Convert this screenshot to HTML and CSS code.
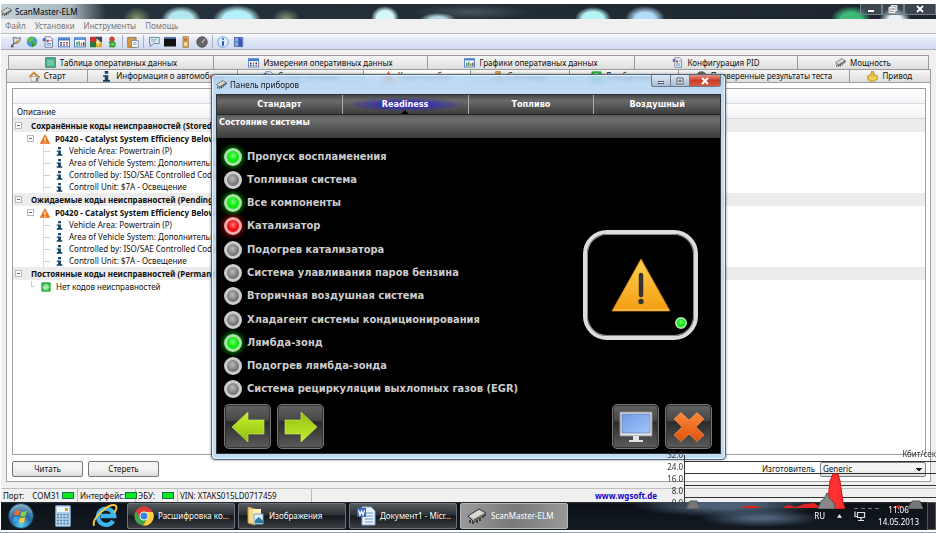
FILE: index.html
```html
<!DOCTYPE html>
<html lang="ru">
<head>
<meta charset="utf-8">
<title>ScanMaster-ELM</title>
<link rel="stylesheet" href="styles.css">
</head>
<body>
<svg class="defs" aria-hidden="true">
  <defs>
    <linearGradient id="gArrow" x1="0" y1="0" x2="0" y2="1"><stop offset="0" stop-color="#c6ee2c"/><stop offset="1" stop-color="#8fc010"/></linearGradient>
    <linearGradient id="gWarn" x1="0" y1="0" x2="0" y2="1"><stop offset="0" stop-color="#ffcf50"/><stop offset="1" stop-color="#f39d12"/></linearGradient>
    <linearGradient id="gScreen" x1="0" y1="0" x2="1" y2="1"><stop offset="0" stop-color="#6f9be8"/><stop offset="1" stop-color="#a3c4f8"/></linearGradient>
    <linearGradient id="gCross" x1="0" y1="0" x2="0" y2="1"><stop offset="0" stop-color="#f98a3c"/><stop offset="1" stop-color="#e2500c"/></linearGradient>
    <radialGradient id="gOrb" cx=".5" cy=".85" r=".85"><stop offset="0" stop-color="#5fd0f4"/><stop offset=".5" stop-color="#22689c"/><stop offset="1" stop-color="#8fb4cc"/></radialGradient>
    <symbol id="chip" viewBox="0 0 20 16"><path d="M3 12v3M6 13v3M10 12v3M13 10v3M16 7v3M18 5v3" stroke="#222" stroke-width="1.5"/><path d="M1 8 12 1l7 4L7 14z" fill="#aaa" stroke="#333"/><path d="M2 8l10-6 5 2.500L7 11z" fill="#d8d8d2"/><path d="M7 11v3l12-8V5z" fill="#666"/></symbol>
    <symbol id="plug" viewBox="0 0 16 16"><path d="M4 2l8 1 2-1-1 5-4 3-4-1z" fill="#d8d8d8" stroke="#555"/><path d="M6 9c0 3-4 1-4 5h3" fill="none" stroke="#555" stroke-width="1.800"/><path d="M8 9l3-3" stroke="#c80" stroke-width="2"/></symbol>
    <symbol id="globe" viewBox="0 0 16 16"><circle cx="8" cy="7.500" r="7" fill="#4a90d8"/><path d="M2 4l4-3 5 1-1 4-5 3-3-2zM9 8l5-1-1 4-3 2z" fill="#5cc03c"/><path d="M8 8v7l5-3z" fill="#2f9d28"/></symbol>
    <symbol id="doc" viewBox="0 0 16 16"><path d="M4 1h7l3 3v11H4z" fill="#e8f0fc" stroke="#668" /><path d="M6 5h3v3H6z" fill="#d33"/><path d="M10 6h3M6 10h6M6 12h6" stroke="#48b"/><path d="M1 3h4v4H1z" fill="#4a6fb8"/></symbol>
    <symbol id="grid" viewBox="0 0 16 16"><rect x=".5" y="2.500" width="15" height="12" fill="#fff" stroke="#245bb0"/><path d="M1 3h14v3H1z" fill="#3c78d0"/><path d="M3 8h2v2H3zM3 11h2v2H3zM11 8h2v2h-2z" fill="#224"/><path d="M7 8h2v2H7zM11 11h2v2h-2z" fill="#d33"/><path d="M7 11h2v2H7z" fill="#248"/></symbol>
    <symbol id="chart" viewBox="0 0 16 16"><rect x=".5" y="2.500" width="15" height="12" fill="#fff" stroke="#245bb0"/><path d="M1 3h14v2H1z" fill="#3c78d0"/><path d="M3 8h2v5H3z" fill="#2a8c7c"/><path d="M6 7h2v6H6z" fill="#49a850"/><path d="M9 9h2v4H9z" fill="#d36a2a"/><path d="M12 8h2v5h-2z" fill="#357"/></symbol>
    <symbol id="mosaic" viewBox="0 0 16 16"><path d="M0 1h8v7H0z" fill="#c33"/><path d="M8 1h8v7H8z" fill="#345"/><path d="M0 8h8v7H0z" fill="#2d7b3c"/><path d="M8 8h8v7H8z" fill="#e6a81c"/><path d="M9 3l5 5-3 5-3-4z" fill="#f4df9a"/></symbol>
    <symbol id="dtc" viewBox="0 0 16 16"><circle cx="8" cy="4" r="3.500" fill="#c42"/><path d="M4 7h7v3H4zM5 12h7v3H4z" fill="#278c28"/><circle cx="9" cy="11" r="4" fill="#39a535"/><path d="M7 11h4" stroke="#fff"/></symbol>
    <symbol id="paste" viewBox="0 0 16 16"><rect x="1" y="2" width="11" height="13" fill="#d99b3c" stroke="#96611c"/><path d="M4 1h5v3H4z" fill="#999"/><path d="M6 6h9v9H6z" fill="#fff" stroke="#679"/><path d="M8 9h5M8 11h5" stroke="#68a"/></symbol>
    <symbol id="speech" viewBox="0 0 16 16"><path d="M2 2h13v8H7l-4 4v-4H2z" fill="#dfeefa" stroke="#567"/><path d="M4 5h8M4 7h6" stroke="#6a9"/></symbol>
    <symbol id="term" viewBox="0 0 16 16"><rect y="2" width="16" height="12" fill="#111"/><path d="M0 2h16v2H0z" fill="#3c6cb0"/></symbol>
    <symbol id="lamp" viewBox="0 0 16 16"><rect x="4" y="1" width="7" height="14" fill="#dcb26a" stroke="#96702c"/><path d="M6 3h3v4H6z" fill="#c53"/><path d="M6 9h3v4H6z" fill="#fff2b0"/></symbol>
    <symbol id="gauge" viewBox="0 0 16 16"><circle cx="8" cy="8" r="7" fill="#666" stroke="#444"/><path d="M8 9l4-5" stroke="#ccc" stroke-width="1.500"/></symbol>
    <symbol id="about" viewBox="0 0 16 16"><circle cx="8" cy="8" r="7" fill="#dcecff" stroke="#5a8cc8"/><path d="M8 3v2M8 7v6" stroke="#1e50b0" stroke-width="2.500"/></symbol>
    <symbol id="door" viewBox="0 0 16 16"><path d="M2 2h11v12H2z" fill="#88aee0" stroke="#3a4ea0"/><path d="M7 2l5 2v11l-5-2z" fill="#4554b8"/><path d="M1 7h5v2H1z" fill="#2a9"/></symbol>
    <symbol id="list" viewBox="0 0 16 16"><rect x="1" y="1" width="14" height="14" fill="#46a88c" stroke="#287860"/><path d="M3 4h10v9H3z" fill="#73c8a8"/></symbol>
    <symbol id="home" viewBox="0 0 16 16"><path d="M3 8h10v7H3z" fill="#f4f0e4" stroke="#999"/><path d="M0 8l7-7 9 8-2 1-7-6-6 5z" fill="#e0961c" stroke="#8a5a10" stroke-width=".6"/><path d="M10 10h3v5h-3z" fill="#5a7cb8"/></symbol>
    <symbol id="info" viewBox="0 0 16 16"><path d="M5.500 0h5v4h-5zM3 6h7.500v7H13v2.500H3V13h2.500V8.500H3z" fill="#12405e"/></symbol>
    <symbol id="warn" viewBox="0 0 16 16"><path d="M8 1l7.500 14H.5z" fill="#f07818" stroke="#e06010"/><path d="M8 5v6M8 12.500v1.800" stroke="#fff" stroke-width="1.800"/></symbol>
    <symbol id="ok" viewBox="0 0 16 16"><rect x=".5" y=".5" width="15" height="15" rx="2" fill="#2fae40"/><path d="M5 3h6l3 5-3 5H5L2 8z" fill="#7fe08c"/><path d="M5 8l2 3 4-5" stroke="#fff" stroke-width="1.500" fill="none"/></symbol>
    <symbol id="drive" viewBox="0 0 16 16"><path d="M6 1h4v4l5 2v5l-5 3H5l-4-3V7l5-2z" fill="#edc240" stroke="#a87a18"/><path d="M4 9c3 3 6 3 9 0" fill="none" stroke="#fff0a0"/></symbol>
    <symbol id="arrowLeft" viewBox="0 0 34 32"><path d="M1 16 17 1v8h16v14H17v8z" fill="url(#gArrow)" stroke="#d2f060" stroke-width=".6"/></symbol>
  </defs>
</svg>

<div class="screen">
  <header class="titlebar">
    <svg class="ico"><use href="#chip"/></svg>
    <h1>ScanMaster-ELM</h1>
    <div class="win-buttons">
      <button type="button" aria-label="Свернуть"><svg viewBox="0 0 10 8"><path d="M2 6h6" stroke="#fff" stroke-width="2"/></svg></button>
      <button type="button" aria-label="Восстановить"><svg viewBox="0 0 10 8"><path d="M3 .5h6v5H3zM1 2.500h6v5H1z" fill="#aaa" stroke="#eee"/></svg></button>
      <button type="button" class="wide" aria-label="Закрыть"><svg viewBox="0 0 10 8"><path d="M2 1l6 6M8 1L2 7" stroke="#fff" stroke-width="1.800"/></svg></button>
    </div>
  </header>

  <nav class="menubar">
    <a href="#">Файл</a><a href="#">Установки</a><a href="#">Инструменты</a><a href="#">Помощь</a>
  </nav>

  <div class="toolbar">
    <button type="button" aria-label="Подключить"><svg class="ico"><use href="#plug"/></svg></button>
    <button type="button" aria-label="Сеть"><svg class="ico"><use href="#globe"/></svg></button>
    <button type="button" aria-label="Отчёт"><svg class="ico"><use href="#doc"/></svg></button>
    <button type="button" aria-label="Измерения"><svg class="ico"><use href="#grid"/></svg></button>
    <button type="button" aria-label="Графики"><svg class="ico"><use href="#chart"/></svg></button>
    <button type="button" aria-label="Панель"><svg class="ico"><use href="#mosaic"/></svg></button>
    <button type="button" aria-label="Коды"><svg class="ico"><use href="#dtc"/></svg></button>
    <i class="sep"></i>
    <button type="button" aria-label="Вставить"><svg class="ico"><use href="#paste"/></svg></button>
    <i class="sep"></i>
    <button type="button" aria-label="Сообщения"><svg class="ico"><use href="#speech"/></svg></button>
    <button type="button" aria-label="Терминал"><svg class="ico"><use href="#term"/></svg></button>
    <button type="button" aria-label="Индикатор"><svg class="ico"><use href="#lamp"/></svg></button>
    <button type="button" aria-label="Прибор"><svg class="ico"><use href="#gauge"/></svg></button>
    <i class="sep"></i>
    <button type="button" aria-label="О программе"><svg class="ico"><use href="#about"/></svg></button>
    <button type="button" aria-label="Выход"><svg class="ico"><use href="#door"/></svg></button>
  </div>

  <main class="workspace">
    <div class="tabs tabs-top">
      <button type="button"><svg class="ico"><use href="#list"/></svg>Таблица оперативных данных</button>
      <button type="button"><svg class="ico"><use href="#grid"/></svg>Измерения оперативных данных</button>
      <button type="button"><svg class="ico"><use href="#chart"/></svg>Графики оперативных данных</button>
      <button type="button"><svg class="ico"><use href="#doc"/></svg>Конфигурация PID</button>
      <button type="button"><svg class="ico"><use href="#chip"/></svg>Мощность</button>
    </div>
    <div class="tabs tabs-bottom">
      <button type="button"><svg class="ico"><use href="#home"/></svg>Старт</button>
      <button type="button"><svg class="ico"><use href="#info"/></svg>Информация о автомобиле</button>
      <button type="button"><svg class="ico"><use href="#doc"/></svg>Статус системы</button>
      <button type="button" class="active"><svg class="ico"><use href="#warn"/></svg>Коды ошибок</button>
      <button type="button"><svg class="ico"><use href="#lamp"/></svg>Стоп-кадр</button>
      <button type="button"><svg class="ico"><use href="#ok"/></svg>Лямбда-зонд</button>
      <button type="button"><svg class="ico"><use href="#gauge"/></svg>Проверенные результаты теста</button>
      <button type="button"><svg class="ico"><use href="#drive"/></svg>Привод</button>
    </div>

    <section class="panel">
      <div class="table">
        <div class="band"></div>
        <div class="band head">Описание</div>
        <ul class="tree">
          <li>
            <div class="group"><i class="toggle"></i>Сохранённые коды неисправностей (Stored</div>
            <div class="code"><i class="toggle"></i><svg class="ico"><use href="#warn"/></svg>P0420 - Catalyst System Efficiency Below</div>
            <ul class="details">
              <li><svg class="ico"><use href="#info"/></svg>Vehicle Area: Powertrain (P)</li>
              <li><svg class="ico"><use href="#info"/></svg>Area of Vehicle System: Дополнительный</li>
              <li><svg class="ico"><use href="#info"/></svg>Controlled by: ISO/SAE Controlled Code (Co</li>
              <li><svg class="ico"><use href="#info"/></svg>Controll Unit: $7A - Освещение</li>
            </ul>
          </li>
          <li>
            <div class="group"><i class="toggle"></i>Ожидаемые коды неисправностей (Pending</div>
            <div class="code"><i class="toggle"></i><svg class="ico"><use href="#warn"/></svg>P0420 - Catalyst System Efficiency Below</div>
            <ul class="details">
              <li><svg class="ico"><use href="#info"/></svg>Vehicle Area: Powertrain (P)</li>
              <li><svg class="ico"><use href="#info"/></svg>Area of Vehicle System: Дополнительный</li>
              <li><svg class="ico"><use href="#info"/></svg>Controlled by: ISO/SAE Controlled Code (Co</li>
              <li><svg class="ico"><use href="#info"/></svg>Controll Unit: $7A - Освещение</li>
            </ul>
          </li>
          <li>
            <div class="group"><i class="toggle"></i>Постоянные коды неисправностей (Permane</div>
            <div class="code none"><i class="elbow"></i><svg class="ico"><use href="#ok"/></svg>Нет кодов неисправностей</div>
          </li>
        </ul>
      </div>
      <div class="actions">
        <button type="button">Читать</button>
        <button type="button">Стереть</button>
        <label for="maker">Изготовитель</label>
        <select id="maker"><option>Generic</option></select>
      </div>
    </section>
  </main>

  <footer class="status">
    <span class="cell port">Порт: <b>COM31</b><i class="lamp"></i></span>
    <span class="cell iface">Интерфейс:<i class="lamp"></i></span>
    <span class="cell ecu">ЭБУ:<i class="lamp"></i></span>
    <span class="cell vin">VIN: XTAKS015LD0717459</span>
    <a class="site" href="#">www.wgsoft.de</a>
  </footer>

  <div class="taskbar">
    <button type="button" class="launch" aria-label="Пуск"><svg viewBox="0 0 26 26"><circle cx="13" cy="13" r="12.500" fill="url(#gOrb)" stroke="#14364c"/><path d="M7 8c2-1.500 3.500-1.300 5-.4l-1 5c-1.600-.8-3.200-.8-5 .4z" fill="#f26a2c"/><path d="M13.300 8.200c1.800 1 3.600.8 5.500-.4l-1.200 5c-1.800 1.200-3.500 1.200-5.300.2z" fill="#8fce3c"/><path d="M5.800 14.300c1.700-1.100 3.400-1.200 5-.3l-1.100 4.700c-1.600-.8-3.200-.7-5 .4z" fill="#3c9ff0"/><path d="M12 14.400c1.700.9 3.500.8 5.300-.3l-1.200 4.800c-1.700 1.100-3.500 1.100-5.200.2z" fill="#fccf30"/></svg></button>
    <button type="button" class="launch calc" aria-label="Калькулятор"><svg viewBox="0 0 16 22"><rect x=".5" y=".5" width="15" height="21" rx="1" fill="#b4cfe8" stroke="#6c94b8"/><path d="M2 2h12v5H2z" fill="#eef8ff"/><path d="M10 3h3v3h-3z" fill="#d8a02c"/><path d="M2 9.500h12M2 12.500h12M2 15.500h12M2 18.500h12" stroke="#4f80ac" stroke-width="1.600" stroke-dasharray="2 1.200"/></svg></button>
    <button type="button" class="launch" aria-label="Internet Explorer"><svg viewBox="0 0 24 24"><path d="M19.500 16.500a7.500 7.500 0 1 1 1-4.500H8" fill="none" stroke="#3db4ee" stroke-width="4"/><path d="M2 21C-1 15 14 1 21 2c3 .8 1 5-.5 7" fill="none" stroke="#f4cb3c" stroke-width="1.800"/></svg></button>
    <button type="button" class="task"><svg viewBox="0 0 20 20"><circle cx="10" cy="10" r="9.500" fill="#e33b2e"/><path d="M1.800 5.200A9.500 9.500 0 0 0 9 19.500l4.500-7.500H6z" fill="#3aa64a"/><path d="M9 19.500A9.500 9.500 0 0 0 18.800 6H10l4 6z" fill="#fbd13a"/><circle cx="10" cy="10" r="4.500" fill="#fff"/><circle cx="10" cy="10" r="3.500" fill="#3f7fe0"/></svg>Расшифровка ко...</button>
    <button type="button" class="task"><svg viewBox="0 0 20 20"><path d="M3 1l7 2v16l-7-2z" fill="#f3d987" stroke="#b99643"/><path d="M8 3h8v13H8z" fill="#fff0bb"/><path d="M9 8h9v10H9z" fill="#d8efff" stroke="#7c9fb8"/><path d="M10 14l4-3 4 4v2h-8z" fill="#2b7ca4"/></svg>Изображения</button>
    <button type="button" class="task"><svg viewBox="0 0 20 20"><path d="M6 1h9l4 4v14H6z" fill="#e8f2fc" stroke="#8aaad0"/><path d="M9 7h8M9 10h8M9 13h8M9 16h8" stroke="#6c96cc"/><rect x="1" y="2" width="9" height="9" fill="#3a66b8"/><path d="M2.500 4l1.500 5 1.500-4 1.500 4 1.500-5" fill="none" stroke="#fff" stroke-width="1.200"/></svg>Документ1 - Micr...</button>
    <button type="button" class="task current"><svg><use href="#chip"/></svg>ScanMaster-ELM</button>
    <div class="tray">
      <span>RU</span>
      <svg viewBox="0 0 6 4"><path d="M0 4l3-4 3 4z" fill="#fff"/></svg>
      <svg class="net" viewBox="0 0 12 12"><path d="M3.500 2.500h7v5h-7zM1 1.500v5h2M7 8v2M4 10.500h6" fill="none" stroke="#ddd" stroke-width="1.200"/></svg>
      <time>11:06<br>14.05.2013</time>
      <i class="peek"></i>
    </div>
  </div>

  <section class="dialog" role="dialog" aria-labelledby="dlg-title">
    <header>
      <svg class="ico"><use href="#chip"/></svg>
      <h2 id="dlg-title">Панель приборов</h2>
      <div class="dlg-buttons">
        <button type="button" aria-label="Свернуть"><svg viewBox="0 0 10 8"><path d="M2 5.500h6" stroke="#556" stroke-width="3"/><path d="M2.500 5.500h5" stroke="#fff"/></svg></button>
        <button type="button" aria-label="Развернуть"><svg viewBox="0 0 10 8"><path d="M2 1h6v6H2zM4 3h2v2H4z" fill="#fff" stroke="#556"/></svg></button>
        <button type="button" class="close" aria-label="Закрыть"><svg viewBox="0 0 10 8"><path d="M2 1l6 6M8 1L2 7" stroke="#fff" stroke-width="2"/></svg></button>
      </div>
    </header>
    <div class="dash">
      <nav class="dash-tabs">
        <button type="button">Стандарт</button>
        <button type="button" class="active">Readiness</button>
        <button type="button">Топливо</button>
        <button type="button">Воздушный</button>
      </nav>
      <h3>Состояние системы</h3>
      <div class="readiness">
        <ul>
          <li><i class="led green"></i>Пропуск воспламенения</li>
          <li><i class="led"></i>Топливная система</li>
          <li><i class="led green"></i>Все компоненты</li>
          <li><i class="led red"></i>Катализатор</li>
          <li><i class="led"></i>Подогрев катализатора</li>
          <li><i class="led"></i>Система улавливания паров бензина</li>
          <li><i class="led"></i>Вторичная воздушная система</li>
          <li><i class="led"></i>Хладагент системы кондиционирования</li>
          <li><i class="led green"></i>Лямбда-зонд</li>
          <li><i class="led"></i>Подогрев лямбда-зонда</li>
          <li><i class="led"></i>Система рециркуляции выхлопных газов (EGR)</li>
        </ul>
        <div class="mil">
          <svg viewBox="0 0 60 54"><path d="M30 1 59 53H1z" fill="url(#gWarn)" stroke="#c97f10" stroke-width=".8"/><path d="M2 52h56" stroke="#ffd070"/><path d="M30 17v20" stroke="#333" stroke-width="4.500" stroke-linecap="round"/><circle cx="30" cy="43.500" r="2.700" fill="#333"/></svg>
          <i class="led green small"></i>
        </div>
      </div>
      <div class="dash-actions">
        <button type="button" aria-label="Назад"><svg viewBox="0 0 34 32"><use href="#arrowLeft" width="34" height="32"/></svg></button>
        <button type="button" aria-label="Вперёд"><svg class="flip" viewBox="0 0 34 32"><use href="#arrowLeft" width="34" height="32"/></svg></button>
        <button type="button" class="push" aria-label="Экран"><svg viewBox="0 0 34 32"><path d="M1 1h32v24H1z" fill="#e4e8ea" stroke="#888"/><path d="M3 3h28v19H3z" fill="url(#gScreen)" stroke="#5574b0" stroke-width=".6"/><path d="M14 25h6v4h4v2H10v-2h4z" fill="#dfe6e8"/></svg></button>
        <button type="button" aria-label="Закрыть панель"><svg viewBox="0 0 34 32"><path d="M9 1.500 17 9l8-7.500 7 6.500-8 8 8 8-7 6.500-8-7.500-8 7.500L2 24l8-8-8-8z" fill="url(#gCross)" stroke="#ff9a58" stroke-width=".6"/></svg></button>
      </div>
    </div>
  </section>

  <div class="traffic">
    <ol><li>32.0</li><li>24.0</li><li>16.0</li><li>8.0</li><li>0.0</li></ol>
    <div class="plot">
      <span>Кбит/сек</span>
      <svg viewBox="0 0 252 58" preserveAspectRatio="none">
        <path d="M.5 4v52M0 10.500h252M0 22.500h252M0 34.500h252M0 46.500h252" stroke="#333" fill="none"/>
        <path d="M2 58 6 50h7l3 8zM223 58l5-8h8l3 8z" fill="#777" stroke="#555"/>
        <path d="M56 57q10-5 22 0zM98 57l6-3 8 2 8-3 10-1 8 5zM208 57l7-3 4 3z" fill="#d22" />
        <path d="M143 58l3-28 3-7h5l2 7 3 21 2 7z" fill="#ff3030" stroke="#c11"/>
        <path d="M134 58l3-8 3-2 3-6 3 6 4 4 1 6z" fill="#888" stroke="#555"/>
        <path d="M170 57.500h26" stroke="#777" stroke-dasharray="4 3"/>
      </svg>
    </div>
  </div>
</div>
</body>
</html>
```

FILE: styles.css
```css
:root {
  --ui: "Noto Sans", "Open Sans", sans-serif;
  --tahoma: "DejaVu Sans Condensed", "DejaVu Sans", sans-serif;
  --line: #a0a0a0;
}

* { box-sizing: border-box; }

body {
  margin: 0;
  background: #fff;
  color: #111;
  font: 8px/12px var(--ui);
}

button { font: inherit; color: inherit; padding: 0; border: 0; background: none; }
a { color: inherit; text-decoration: none; }
ul, ol { list-style: none; margin: 0; padding: 0; }
h1, h2, h3 { margin: 0; font-weight: normal; }
.defs { position: absolute; width: 0; height: 0; }
.ico { width: 11px; height: 11px; flex: none; }

.screen {
  position: relative;
  display: flex;
  flex-direction: column;
  height: 100vh;
  padding: 4px 0 2px 1px;
  border-bottom: 1px solid #8d9bb5;
  overflow: hidden;
}

/* main window frame */
.titlebar {
  display: flex;
  align-items: center;
  gap: 3px;
  height: 15px;
  flex: none;
  background:
    radial-gradient(ellipse 14px 12px at 136px 15px, #8a9c70, transparent),
    radial-gradient(ellipse 20px 14px at 180px 16px, #b4e8f0 60%, transparent),
    radial-gradient(ellipse 24px 15px at 236px 16px, #b4f0fa 60%, transparent),
    radial-gradient(ellipse 14px 10px at 285px 15px, #8a9678, transparent),
    radial-gradient(ellipse 14px 12px at 384px 14px, #d4f6fa 60%, transparent),
    radial-gradient(ellipse 18px 6px at 437px 15px, #b4d4dc 40%, transparent),
    radial-gradient(ellipse 60px 8px at 470px 8px, #46535e, transparent),
    radial-gradient(ellipse 18px 12px at 592px 15px, #b4f4f4 60%, transparent),
    radial-gradient(ellipse 20px 13px at 644px 15px, #b4dcf8 50%, transparent),
    radial-gradient(ellipse 20px 13px at 850px 15px, #3cb878 50%, transparent),
    radial-gradient(ellipse 16px 12px at 894px 16px, #e4f4f8 40%, transparent),
    linear-gradient(90deg, #c2d0da 0, #a8b6c0 70px, #26323c 105px, #1d262f);
}
.titlebar h1 { font: 8px/14px var(--ui); color: #000; }
.win-buttons { display: flex; align-self: flex-start; margin-left: auto; }
.win-buttons button {
  width: 22px;
  height: 11px;
  display: grid;
  place-items: center;
  border: 1px solid #75808a;
  border-top: 0;
  background: rgba(110, 120, 130, .4);
}
.win-buttons .wide { width: 32px; }
.win-buttons svg { width: 10px; height: 8px; }

.menubar {
  display: flex;
  gap: 9px;
  flex: none;
  height: 15px;
  padding-left: 4px;
  background: #f0f0f0;
  border-bottom: 1px solid #bbb;
  color: #777;
  font: 8px/14px var(--ui);
}

.toolbar {
  display: flex;
  align-items: center;
  gap: 4px;
  flex: none;
  height: 16px;
  padding-left: 9px;
  background: linear-gradient(#fff, #e6ebf9 30%, #d2dcf2 90%);
  border-bottom: 1px solid #b0b0b0;
}
.toolbar button, .toolbar .ico { display: block; width: 12px; height: 12px; }
.sep { width: 1px; height: 13px; background: #aab0bd; }

/* tabbed workspace */
.workspace {
  display: flex;
  flex-direction: column;
  flex: 1;
  min-height: 0;
  padding: 5px 5px 6px;
  background: #f0f0f0;
}
.tabs { display: grid; flex: none; margin: 0 2px; }
.tabs-top { grid-template-columns: 205fr 214fr 207fr 163fr 132fr; height: 14px; }
.tabs-bottom { grid-template-columns: 81fr 149fr 126fr 106fr 99fr 109fr 170fr 82fr; height: 13px; margin: 0; }
.tabs button {
  display: flex;
  align-items: center;
  justify-content: center;
  gap: 4px;
  min-width: 0;
  border: 1px solid #999;
  border-width: 1px 0 0 1px;
  background: linear-gradient(#f6f6f6, #dedede);
  white-space: nowrap;
  overflow: hidden;
}
.tabs button:last-child { border-right-width: 1px; }
.tabs .active { background: #fff; }

.panel {
  display: flex;
  flex-direction: column;
  flex: 1;
  min-height: 0;
  padding: 5px 4px 4px 5px;
  background: #fff;
  border: 1px solid var(--line);
}
.table {
  flex: 1;
  min-height: 0;
  border: 1px solid var(--line);
  overflow: hidden;
}
.band {
  height: 15px;
  padding-left: 4px;
  border-bottom: 1px solid #d8dade;
  background: linear-gradient(#fff, #f3f4f6);
  line-height: 16px;
}
.tree { white-space: nowrap; }
.group, .code, .details li { display: flex; align-items: center; height: 12px; }
.group, .code { height: 13px; font-weight: bold; }
.group { gap: 9px; padding-left: 2px; background: #ececec; }
.code { gap: 5px; padding-left: 14px; }
.code .ico { width: 10px; height: 10px; margin-left: 1px; }
.code.none { font-weight: normal; padding-left: 18px; }
.toggle {
  width: 7px;
  height: 7px;
  flex: none;
  border: 1px solid #b8b8b8;
  background: linear-gradient(#667, #667) center / 3px 1px no-repeat #fff;
}
.elbow { width: 4px; height: 6px; margin-bottom: 6px; border: 1px solid #ccc; border-width: 0 0 1px 1px; }
.details { margin-left: 30px; border-left: 1px solid #ddd; }
.details li { gap: 5px; }
.details li::before { content: ""; width: 6px; height: 1px; background: #ccc; }
.details .ico { width: 9px; height: 9px; }

.actions { display: flex; align-items: center; gap: 5px; flex: none; padding: 6px 0 0; }
.actions button {
  width: 71px;
  height: 16px;
  border: 1px solid #777;
  border-radius: 2px;
  background: linear-gradient(#f4f4f4 50%, #dcdcdc);
}
.actions label { margin-left: auto; }
.actions select {
  width: 106px;
  height: 15px;
  border: 1px solid #808080;
  border-radius: 2px;
  padding: 0 2px;
  appearance: none;
  background:
    conic-gradient(from -45deg at 50% 100%, #111 90deg, transparent 0) right 3px center / 6px 3px no-repeat,
    linear-gradient(#f4f4f4 50%, #dcdcdc);
  font: inherit;
  color: inherit;
}

.status {
  display: flex;
  flex: none;
  height: 14px;
  border-top: 1px solid #c0c0c0;
  background: #f0f0f0;
  line-height: 13px;
}
.cell { display: flex; align-items: center; justify-content: space-between; padding: 0 3px 0 2px; border-right: 1px solid #bbb; white-space: nowrap; }
.cell b { font-weight: normal; }
.port { width: 77px; }
.port b { margin-left: 6px; }
.iface { width: 58px; }
.ecu { width: 42px; }
.vin { width: 134px; }
.lamp { flex: none; width: 12px; height: 7px; background: #0ce81c; border: 1px solid #174; }
.site { margin-left: 283px; color: #10c; font-weight: bold; }

/* taskbar */
.taskbar {
  display: flex;
  align-items: center;
  flex: none;
  height: 28px;
  gap: 3px;
  background:
    radial-gradient(ellipse 95px 12px at 725px 3px, #4c6078 30%, transparent),
    radial-gradient(ellipse 60px 9px at 760px 16px, #4c6078 20%, transparent),
    linear-gradient(#2a3036, #0c1117 8%, #131a22);
}
.launch { width: 39px; height: 26px; display: grid; place-items: center; }
.launch svg { width: 26px; height: 26px; }
.launch.calc svg { width: 16px; height: 22px; }
.task {
  display: flex;
  align-items: center;
  gap: 4px;
  width: 108px;
  height: 26px;
  padding-left: 6px;
  border: 1px solid #6d7378;
  border-radius: 2px;
  background: linear-gradient(#555a5e, #2c3136 45%, #15191d 50%, #3a3e42);
  color: #fff;
  white-space: nowrap;
}
.task svg { width: 20px; height: 20px; flex: none; }
.task.current { background: linear-gradient(100deg, #9a9c9e, #77797b 50%, #999); border-color: #b8b8b8; }
.tray { position: relative; z-index: 1; display: flex; align-items: center; gap: 12px; align-self: stretch; margin-left: auto; color: #fff; }
.tray svg { width: 5px; height: 4px; }
.tray .net { width: 12px; height: 12px; }
.tray time { text-align: center; }
.peek { width: 9px; align-self: stretch; margin-left: -4px; border: 1px solid #555; background: #1b1f24; }

/* network traffic gadget floating above the taskbar */
.traffic {
  position: absolute;
  right: 0;
  bottom: 23px;
  display: flex;
  color: #333;
  pointer-events: none;
}
.traffic ol { display: flex; flex-direction: column; justify-content: flex-end; line-height: 12px; text-align: right; margin-right: 1px; }
.plot { position: relative; align-self: flex-end; width: 252px; }
.plot svg { display: block; width: 100%; height: 58px; }
.plot span { position: absolute; right: 0; top: -3px; }

/* dashboard dialog */
.dialog {
  position: absolute;
  left: 211px;
  top: 74px;
  width: 515px;
  height: 386px;
  display: flex;
  flex-direction: column;
  padding: 0 4px 5px;
  border: 1px solid #54647a;
  border-radius: 4px;
  background: rgba(178, 212, 244, .82);
  backdrop-filter: blur(2px);
  box-shadow: inset 0 0 0 1px #e8f4fd, 0 0 3px rgba(0, 0, 0, .4);
}
.dialog > header { display: flex; align-items: center; gap: 3px; height: 19px; }
.dialog h2 { font: 8px/14px var(--ui); }
.dlg-buttons { display: flex; align-self: flex-start; margin-left: auto; }
.dlg-buttons button {
  width: 19px;
  height: 12px;
  display: grid;
  place-items: center;
  border: 1px solid #69788c;
  border-top: 0;
  border-right: 0;
  background: linear-gradient(#dce8f4, #a9bed4);
}
.dlg-buttons button:first-child { border-radius: 0 0 0 3px; }
.dlg-buttons .close { width: 32px; border-right: 1px solid #69788c; border-radius: 0 0 3px 0; background: linear-gradient(#e49488, #c73c28 50%, #d85c40); }
.dlg-buttons svg { width: 10px; height: 8px; }

.dash { flex: 1; display: flex; flex-direction: column; background: #000; color: #fff; border: 1px solid #333; }
.dash-tabs { display: grid; grid-template-columns: repeat(4, 1fr); height: 20px; border-bottom: 1px solid #222; background: linear-gradient(#444, #6a6a6a 30%, #3c3c3c); }
.dash-tabs button { position: relative; font: bold 9px/17px var(--tahoma); border-right: 1px solid #aaa; }
.dash-tabs button:last-child { border-right: 0; }
.dash-tabs .active { background: radial-gradient(ellipse 60px 7px at center, #2c24c0 20%, transparent); }
.dash-tabs .active::after {
  content: "";
  position: absolute;
  bottom: 0;
  left: 50%;
  margin-left: -4px;
  border: 4px solid transparent;
  border-width: 0 4px 4px;
  border-bottom-color: #000;
}
.dash h3 { height: 23px; padding-left: 2px; background: linear-gradient(#5c5c5c, #6e6e6e 20%, #3a3a3a); font: bold 9px/14px var(--tahoma); }

.readiness { flex: 1; display: flex; justify-content: space-between; padding: 7px 22px 0 7px; }
.readiness ul { display: grid; grid-auto-rows: 1fr; flex: 1; }
.readiness li { display: flex; align-items: center; gap: 5px; font: bold 11px/16px var(--tahoma); color: #ccc; white-space: nowrap; }

.led {
  width: 18px;
  height: 18px;
  flex: none;
  border: 3px solid #ccc;
  border-radius: 50%;
  background: radial-gradient(circle at 45% 40%, #bbb, #777 60%, #666);
}
.led.green { border-color: #a4e4a4; background: radial-gradient(circle at 50% 40%, #7cff7c, #0de80d 50%); box-shadow: 0 0 5px 1px #0a9a0a; }
.led.red { border-color: #f0a8a8; background: radial-gradient(circle at 50% 40%, #ff8080, #ee1010 50%); box-shadow: 0 0 5px 1px #b00808; }
.led.small { width: 12px; height: 12px; border-width: 2px; box-shadow: none; }

.mil {
  position: relative;
  display: grid;
  place-items: center;
  width: 115px;
  height: 110px;
  margin-top: 85px;
  border: 4px solid #ddd;
  border-radius: 24px;
  box-shadow: inset 0 0 0 1px #888;
}
.mil svg { width: 60px; height: 54px; }
.mil .led { position: absolute; right: 7px; bottom: 7px; }

.dash-actions { display: flex; gap: 6px; padding: 3px 8px 4px 7px; }
.dash-actions button {
  width: 47px;
  height: 45px;
  display: grid;
  place-items: center;
  border: 1px solid #777;
  border-radius: 5px;
  background: linear-gradient(#626262, #484848 35%, #2c2c2c 40%, #5c5c5c);
  box-shadow: inset 0 0 0 1px #333;
}
.dash-actions svg { width: 34px; height: 32px; }
.dash-actions .flip { transform: rotate(180deg); }
.dash-actions .push { margin-left: auto; }
```
